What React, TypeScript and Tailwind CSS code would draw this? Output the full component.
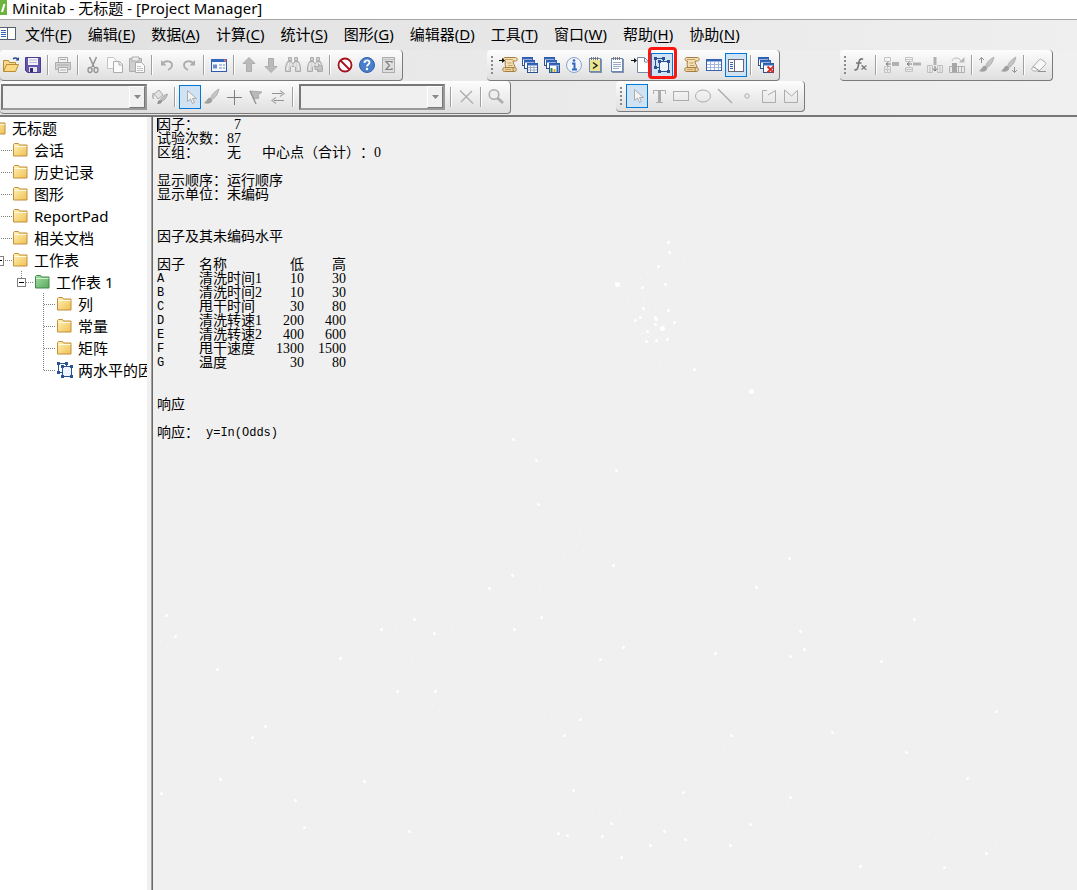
import type { ReactNode } from "react";
import clsx from "clsx";

type Tool = {
  name: string;
  icon: ReactNode;
  active?: boolean;
  marked?: boolean;
};

const GRAY = "#acacac";
const DARK = "#929292";
const NAVY = "#2b5291";

function Svg({ children }: { children: ReactNode }) {
  return (
    <svg width="20" height="20" viewBox="0 0 20 20" fill="none" className="shrink-0">
      {children}
    </svg>
  );
}

/* ---------- アイコン ---------- */

const cursorIcon = (
  <Svg>
    <path d="M7.500 3.500v11l3-2.500 2 4.500 2-1-2-4h4z" fill="#f4f4f4" stroke={GRAY} />
  </Svg>
);

const brush = (
  <>
    <path d="M17 2c-4 2-7 5-8 8l2 2c3-2 5-5 6-10z" fill="#c4c4c4" stroke={GRAY} strokeWidth="0.8" />
    <path d="M8.500 10.500c-3 0-3 3-6.500 5.500 3 1.500 8 1 8.500-3.500z" fill="#a0a0a0" />
  </>
);

const scroll = (
  <>
    <path
      d="M5 2.500h10.500c2 0 2.500 3.500 0 3.500H13c0 3 2 4 2 7h-9c-1-3-1-4-.5-7H5c-2.500 0-2.500-3.500 0-3.500z"
      fill="#f3e0b5"
      stroke="#a67c3f"
    />
    <path
      d="M4.500 12.500h9c-1 1.500-.5 4 1 4h-10c-2.500 0-2.500-4 0-4zM14.500 16.500c2.500 0 2.500-4 0-4h-1"
      fill="#ead09a"
      stroke="#a67c3f"
    />
    <path d="M7.500 8h4M8 10.500h4.500M5 4.500h8M5 14.500h6" stroke="#c4a067" />
  </>
);

const cascade = (
  <>
    <rect x="2.500" y="2.500" width="10" height="8" fill="#fff" stroke={NAVY} />
    <path d="M2 3.500h11" stroke="#3566bd" strokeWidth="2" />
    <rect x="4.500" y="5.500" width="10" height="8" fill="#fff" stroke={NAVY} />
    <path d="M4 6.500h11" stroke="#3566bd" strokeWidth="2" />
    <rect x="7.500" y="8.500" width="10" height="9" fill="#fff" stroke={NAVY} />
    <path d="M7 9.500h11" stroke="#3566bd" strokeWidth="2" />
  </>
);

const designShape = (
  <>
    <path d="M3.500 3.500h8v9h-8z" stroke={NAVY} />
    <path d="M7.500 6.500h9v10h-9z" fill="#eef4fb" stroke={NAVY} />
    <path
      d="M2 2h3v3H2zM10 2h3v3h-3zM2 11h3v3H2zM6 5h3v3H6zM15 5h3v3h-3zM6 15h3v3H6zM15 15h3v3h-3z"
      fill={NAVY}
    />
  </>
);

const notepad = (
  <>
    <rect x="4" y="4" width="12" height="14" fill="#8592aa" />
    <rect x="3.500" y="3.500" width="11" height="13" stroke="#6c88b4" fill="#fff" />
    <path d="M5.500 2v3M7.500 2v3M9.500 2v3M11.500 2v3" stroke="#777" />
  </>
);

const binoculars = (
  <>
    <path d="M5.500 2.500h3v3h-3zM11.500 2.500h3v3h-3z" fill="#d0d0d0" stroke={GRAY} />
    <path d="M4.500 6.500h4l1 2h1l1-2h4l2 5v5h-5v-5h-5v5h-5v-5z" fill="#d2d2d2" stroke={GRAY} />
    <path d="M5.500 8l-1 7M8 8v4M12 8v4M14.500 8l1 7" stroke="#f6f6f6" />
  </>
);

const undoPath = (
  <>
    <path d="M6 8c3-3 9-2 9 2 0 3-2 4-4 5" stroke={GRAY} strokeWidth="1.800" />
    <path d="M4 5v5.500h5.500z" fill={GRAY} />
  </>
);

const fileTools: (Tool | null)[] = [
  {
    name: "打开",
    icon: (
      <Svg>
        <path d="M2.500 16.500v-11h5l1 2h6v3" fill="#f6d98b" stroke="#b98a37" />
        <path d="M2.500 16.500l3-7h12l-3 7z" fill="#fbd981" stroke="#b98a37" />
        <path d="M12 4c2-2 4-1 5 1" stroke="#264f8f" strokeWidth="1.500" />
        <path d="M14.500 5.500H18V2z" fill="#264f8f" />
      </Svg>
    ),
  },
  {
    name: "保存",
    icon: (
      <Svg>
        <path d="M2.500 2.500h15v15h-13l-2-2z" fill="#6855ad" stroke="#4b3b91" />
        <path d="M5 3h10v7H5z" fill="#f2f4fa" />
        <path d="M6 5h8M6 7.500h8" stroke="#b9b9cf" />
        <path d="M6 12h8v5H6z" fill="#e5e5ee" />
        <path d="M7 13h3v4H7z" fill="#32286d" />
      </Svg>
    ),
  },
  null,
  {
    name: "打印",
    icon: (
      <Svg>
        <path d="M5.500 8V2.500h9V8" fill="#f3f3f3" stroke={GRAY} />
        <path d="M2.500 7.500h15v7h-15z" fill="#d2d2d2" stroke={GRAY} />
        <path d="M5.500 12.500h9v5h-9z" fill="#f3f3f3" stroke={GRAY} />
        <path d="M7 4.500h6M7 15h6M4 10h12" stroke={GRAY} />
      </Svg>
    ),
  },
  null,
  {
    name: "剪切",
    icon: (
      <Svg>
        <path d="M6.500 2l4.500 10M13.500 2L9 12" stroke={DARK} strokeWidth="1.500" />
        <ellipse cx="7" cy="15" rx="2" ry="2.500" stroke={DARK} strokeWidth="1.300" />
        <ellipse cx="13" cy="15" rx="2" ry="2.500" stroke={DARK} strokeWidth="1.300" />
      </Svg>
    ),
  },
  {
    name: "复制",
    icon: (
      <Svg>
        <path d="M2.500 2.500h6l3 3v8h-9z" fill="#fafafa" stroke="#c4c4c4" />
        <path d="M8.500 6.500h6l3 3v8h-9z" fill="#fafafa" stroke={GRAY} />
        <path d="M14 7v3h3" stroke={GRAY} />
      </Svg>
    ),
  },
  {
    name: "粘贴",
    icon: (
      <Svg>
        <path d="M2.500 3.500h12v13h-12z" fill="#cecece" stroke={GRAY} />
        <path d="M5 2h7v4H5z" fill="#eee" stroke={GRAY} />
        <path d="M8.500 7.500h6l3 3v7h-9z" fill="#fafafa" stroke={GRAY} />
        <path d="M10 11.500h4M10 13.500h6M10 15.500h6" stroke="#c4c4c4" />
      </Svg>
    ),
  },
  null,
  { name: "撤消", icon: <Svg>{undoPath}</Svg> },
  {
    name: "重做",
    icon: (
      <Svg>
        <g transform="matrix(-1 0 0 1 20 0)">{undoPath}</g>
      </Svg>
    ),
  },
  null,
  {
    name: "编辑对话框",
    icon: (
      <Svg>
        <rect x="2.500" y="4.500" width="15" height="12" fill="#f5f8ff" stroke="#2e59a8" />
        <path d="M2 5.500h16" stroke="#3566bd" strokeWidth="3" />
        <path d="M15 5.500h2" stroke="#f07050" strokeWidth="2" />
        <path d="M4 9.500h4v4H4z" fill="#6d8bc9" />
        <path d="M10 10h3M14 10h2M10 13h3M14 13h2" stroke="#9db0d8" strokeWidth="1.500" />
      </Svg>
    ),
  },
  null,
  {
    name: "上一个",
    icon: (
      <Svg>
        <path d="M10 2.500l6 6h-3.500v8h-5v-8H4z" fill="#bababa" stroke={GRAY} />
      </Svg>
    ),
  },
  {
    name: "下一个",
    icon: (
      <Svg>
        <path d="M10 17.500l6-6h-3.500v-8h-5v8H4z" fill="#bababa" stroke={GRAY} />
      </Svg>
    ),
  },
  { name: "查找", icon: <Svg>{binoculars}</Svg> },
  {
    name: "查找下一个",
    icon: (
      <Svg>
        {binoculars}
        <path d="M10 11.500h3.500V9l4.500 4-4.500 4v-2.500H10z" fill="#c4c4c4" stroke={GRAY} />
      </Svg>
    ),
  },
  null,
  {
    name: "取消",
    icon: (
      <Svg>
        <circle cx="10" cy="10" r="6.500" fill="#fff" stroke="#a3141c" strokeWidth="1.800" />
        <path d="M5.500 5.500l9 9" stroke="#a3141c" strokeWidth="1.800" />
      </Svg>
    ),
  },
  {
    name: "帮助",
    icon: (
      <Svg>
        <circle cx="10" cy="10" r="7.500" fill="#4a7fcb" stroke="#2f5fae" />
        <path d="M7.500 8c0-3.500 5-3.500 5-.5 0 2-2.500 2-2.500 4" stroke="#fff" strokeWidth="1.800" />
        <circle cx="10" cy="14" r="1.200" fill="#fff" />
      </Svg>
    ),
  },
  {
    name: "统计向导",
    icon: (
      <Svg>
        <rect x="3.500" y="2.500" width="12" height="15" fill="#dedede" stroke={GRAY} />
        <path d="M13 8V6.500H7l3.500 4-3.500 4h6V13" stroke="#808080" strokeWidth="1.200" />
        <path d="M4 4.500h11" stroke="#c0c0c0" />
      </Svg>
    ),
  },
];

const managerTools: (Tool | null)[] = [
  {
    name: "显示会话窗口文件夹",
    icon: (
      <Svg>
        <g transform="translate(2 0)">{scroll}</g>
        <path d="M1 5.500h4" stroke="#111" />
        <path d="M4 3l3 2.500L4 8z" fill="#111" />
      </Svg>
    ),
  },
  {
    name: "显示工作表文件夹",
    icon: (
      <Svg>
        {cascade}
        <path d="M8 12.500h9M8 15h9M10.500 11v6M14 11v6" stroke="#9aaac8" />
      </Svg>
    ),
  },
  {
    name: "显示图形文件夹",
    icon: (
      <Svg>
        {cascade}
        <path d="M9.500 17v-4" stroke="#2d8a4b" strokeWidth="2" />
        <path d="M12.500 17v-3" stroke="#e0a92c" strokeWidth="2" />
        <path d="M15.500 17v-6" stroke="#2d62b8" strokeWidth="2" />
      </Svg>
    ),
  },
  {
    name: "显示信息",
    icon: (
      <Svg>
        <circle cx="10" cy="10" r="7.500" fill="#f1f6fd" stroke="#8aa2c9" />
        <path d="M8 8.500h2.500V14M8 14.500h5" stroke="#3468c0" strokeWidth="2" />
        <circle cx="10" cy="5.500" r="1.300" fill="#3468c0" />
      </Svg>
    ),
  },
  {
    name: "显示历史记录",
    icon: (
      <Svg>
        {notepad}
        <path d="M4 5h10v11H4z" fill="#e9e48d" />
        <path d="M7 7.500l4 3-4 3" stroke="#222" strokeWidth="1.500" />
      </Svg>
    ),
  },
  {
    name: "显示 ReportPad",
    icon: (
      <Svg>
        {notepad}
        <path d="M5 7.500h8M5 9.500h8M5 11.500h8M5 13.500h6" stroke="#9aa9c4" />
      </Svg>
    ),
  },
  {
    name: "显示相关文档",
    icon: (
      <Svg>
        <path d="M7.500 2.500h7l4 4v11h-11z" fill="#fff" stroke="#7689a8" />
        <path d="M14.500 3v4h4" stroke="#7689a8" />
        <path d="M1 5.500h4" stroke="#111" />
        <path d="M4 3l3 2.500L4 8z" fill="#111" />
      </Svg>
    ),
  },
  { name: "显示设计", icon: <Svg>{designShape}</Svg>, active: true, marked: true },
  null,
  { name: "会话窗口", icon: <Svg>{scroll}</Svg> },
  {
    name: "当前数据窗口",
    icon: (
      <Svg>
        <rect x="2.500" y="4.500" width="15" height="11" fill="#fff" stroke="#3a62a8" />
        <path d="M2 5.500h16" stroke="#3566bd" strokeWidth="2" />
        <path d="M3 9.500h14M3 12.500h14M6.500 7v8M10.500 7v8M14.500 7v8" stroke="#a5b8dc" />
      </Svg>
    ),
  },
  {
    name: "项目管理器",
    active: true,
    icon: (
      <Svg>
        <rect x="2.500" y="4.500" width="15" height="12" fill="#fff" stroke="#667" />
        <path d="M8.500 5v11" stroke="#667" />
        <path d="M4 7.500h3M4 9.500h3M4 11.500h3M4 13.500h3" stroke="#3566bd" />
      </Svg>
    ),
  },
  null,
  {
    name: "关闭所有图形",
    icon: (
      <Svg>
        {cascade}
        <path d="M11.500 11.500l6 6M17.500 11.500l-6 6" stroke="#e02b20" strokeWidth="2" />
      </Svg>
    ),
  },
];

const worksheetTools: (Tool | null)[] = [
  {
    name: "指定公式",
    icon: (
      <Svg>
        <path d="M12 4.500c-2-1.500-3.500 0-4 2.500l-1 5c-.5 2.500-2 3.500-3.500 2.500M5 8h5.500" stroke="#777" strokeWidth="1.600" />
        <path d="M10.500 10.500c2 0 2.500 4 5 4M15.500 10.500l-5 4" stroke="#777" strokeWidth="1.300" />
      </Svg>
    ),
  },
  null,
  {
    name: "插入单元格",
    icon: (
      <Svg>
        <path d="M3.500 2.500h6v4h-6zM3.500 11.500h6v6h-6zM6.500 11.500v6M3.500 14.500h6" stroke="#c4c4c4" />
        <path d="M11 7h7v4h-7z" fill="#b0b0b0" />
        <path d="M5 9h5M7.500 7L5 9l2.500 2" stroke="#777" />
      </Svg>
    ),
  },
  {
    name: "插入行",
    icon: (
      <Svg>
        <path d="M2.500 2.500h7v4h-7zM2.500 12.500h7v4h-7zM2.500 4.500h7M2.500 14.500h7" stroke="#c4c4c4" />
        <path d="M10 7.500h8v3h-8z" fill="#b0b0b0" />
        <path d="M4 9h5M6.500 7L4 9l2.500 2" stroke="#777" />
      </Svg>
    ),
  },
  {
    name: "插入列",
    icon: (
      <Svg>
        <path d="M2.500 10.500h5v7h-5zM12.500 10.500h5v7h-5zM5 10.500v7M15 10.500v7" stroke="#c0c0c0" />
        <path d="M8.500 2h3v8h-3z" fill="#b0b0b0" />
        <path d="M10 11v5M8 13.500l2 2.500 2-2.500" stroke="#777" />
      </Svg>
    ),
  },
  {
    name: "移动列",
    icon: (
      <Svg>
        <path d="M2.500 11.500h15v6h-15zM11.500 11.500v6M14.500 11.500v6" stroke="#b0b0b0" />
        <path d="M5 8h5v9H5z" fill="#a6a6a6" />
        <path d="M5 6c1-4 7-4 9 0" stroke="#b8b8b8" />
        <path d="M17.500 2v5.500H12z" fill="#b8b8b8" />
      </Svg>
    ),
  },
  null,
  {
    name: "上一个刷亮行",
    icon: (
      <Svg>
        {brush}
        <path d="M4.500 8V2.500M2 5l2.500-2.500L7 5" stroke={DARK} />
      </Svg>
    ),
  },
  {
    name: "下一个刷亮行",
    icon: (
      <Svg>
        {brush}
        <path d="M15.500 12v5.500M13 15l2.500 2.500L18 15" stroke={DARK} />
      </Svg>
    ),
  },
  null,
  {
    name: "清除单元格",
    icon: (
      <Svg>
        <path d="M3 13l7-8c1-1 2-1 3 0l3 2c1 1 1 2 0 3l-6 6H6c-2 0-4-1-3-3z" fill="#f7f7f7" stroke={GRAY} />
        <path d="M4 11.500l6 4M9 16.500h8" stroke={DARK} />
      </Svg>
    ),
  },
];

const graphTools: (Tool | null)[] = [
  { name: "选择", icon: cursorIcon, active: true },
  { name: "刷亮", icon: <Svg>{brush}</Svg> },
  {
    name: "十字线",
    icon: (
      <Svg>
        <path d="M10.500 3v15M3 10.500h15" stroke="#808080" />
      </Svg>
    ),
  },
  {
    name: "标志",
    icon: (
      <Svg>
        <path d="M4 4l12 1-4 3 1 3-5 1z" fill="#b9b9b9" stroke={GRAY} />
        <path d="M4 4l6 13" stroke={DARK} strokeWidth="1.300" />
      </Svg>
    ),
  },
  {
    name: "交换",
    icon: (
      <Svg>
        <path d="M4 6.500h10M6 13.500h10" stroke={DARK} />
        <path d="M12 3.500l4 3-4 3M8 10.500l-4 3 4 3" stroke={GRAY} strokeWidth="1.300" />
      </Svg>
    ),
  },
];

const annotationTools: (Tool | null)[] = [
  { name: "选择", icon: cursorIcon, active: true },
  {
    name: "文本",
    icon: (
      <Svg>
        <path d="M4.500 8V4.500h12V8" stroke={GRAY} />
        <path d="M10.500 4v12" stroke={GRAY} strokeWidth="3" />
        <path d="M7 16.500h7" stroke={GRAY} />
      </Svg>
    ),
  },
  {
    name: "矩形",
    icon: (
      <Svg>
        <rect x="2.500" y="5.500" width="15" height="9" stroke={GRAY} />
      </Svg>
    ),
  },
  {
    name: "椭圆",
    icon: (
      <Svg>
        <ellipse cx="10" cy="10" rx="7.500" ry="6" stroke={GRAY} />
      </Svg>
    ),
  },
  {
    name: "直线",
    icon: (
      <Svg>
        <path d="M3 3l14 14" stroke={GRAY} strokeWidth="1.400" />
      </Svg>
    ),
  },
  {
    name: "标记",
    icon: (
      <Svg>
        <circle cx="10" cy="10" r="2.200" stroke={GRAY} />
      </Svg>
    ),
  },
  {
    name: "折线",
    icon: (
      <Svg>
        <path d="M8 4.500H3.500v12h13v-12L9 9" stroke={GRAY} />
      </Svg>
    ),
  },
  {
    name: "多边形",
    icon: (
      <Svg>
        <path d="M3.500 4v12.500h13v-12L10.500 10z" stroke={GRAY} />
      </Svg>
    ),
  },
];

const paintTool: Tool = {
  name: "填充",
  icon: (
    <Svg>
      <path d="M4 7l5-4 4 5-5 4z" fill="#e2e2e2" stroke={GRAY} />
      <path d="M3.500 6c-1 2-1 4 0 6" stroke={GRAY} strokeWidth="1.500" />
      <path d="M17.500 7c-4 1-6 4-7 6l2 1c2-1 4-3 5-7z" fill="#c0c0c0" stroke={GRAY} />
      <path d="M10 13c-2 0-2 2-3 3.500 2 1 5 0 5-2.500z" fill={DARK} />
    </Svg>
  ),
};

const deleteTool: Tool = {
  name: "删除",
  icon: (
    <Svg>
      <path d="M4 3.500l13 13M16 4L5 15" stroke={GRAY} strokeWidth="1.300" />
    </Svg>
  ),
};

const zoomTool: Tool = {
  name: "缩放",
  icon: (
    <Svg>
      <circle cx="8" cy="7.500" r="4.800" fill="#eee" stroke={GRAY} strokeWidth="1.500" />
      <path d="M11.500 11l5.500 5" stroke={GRAY} strokeWidth="2.800" />
    </Svg>
  ),
};

/* ---------- ツールバー ---------- */

function ToolButton({ tool }: { tool: Tool }) {
  return (
    <button
      type="button"
      aria-label={tool.name}
      className={clsx(
        "relative flex h-6 w-[22px] shrink-0 items-center justify-center",
        tool.active && "border border-[#0078d7] bg-[#cfe3f4]",
      )}
    >
      {tool.icon}
      {tool.marked && (
        <span className="absolute -top-[7px] -left-1 h-8 w-[29px] rounded-sm border-3 border-[#fb1710]" />
      )}
    </button>
  );
}

function Separator() {
  return (
    <span className="flex h-5 w-2 shrink-0 justify-center">
      <span className="w-px bg-[#a0a0a0]" />
      <span className="w-px bg-white" />
    </span>
  );
}

function Grip() {
  return (
    <span className="flex w-[10px] shrink-0 flex-col items-center gap-[2px]">
      {[0, 1, 2, 3, 4].map((n) => (
        <span key={n} className="size-[2px] bg-[#8a8a8a]" />
      ))}
    </span>
  );
}

function Tools({ tools }: { tools: (Tool | null)[] }) {
  return tools.map((tool, i) => (tool ? <ToolButton key={i} tool={tool} /> : <Separator key={i} />));
}

function ToolGroup({ label, className, children }: { label: string; className?: string; children: ReactNode }) {
  return (
    <div
      role="toolbar"
      aria-label={label}
      className={clsx(
        "flex shrink-0 items-center rounded-sm border-r border-b border-[#7a7a7a] bg-linear-to-b from-[#fdfdfd] to-[#dfdfdf]",
        className,
      )}
    >
      {children}
    </div>
  );
}

function ComboBox({ label }: { label: string }) {
  return (
    <span className="flex h-[26px] w-[146px] shrink-0 border-2 border-t-[#777] border-r-[#999] border-b-[#999] border-l-[#777] bg-[#f0f0f0]">
      <select aria-label={label} className="min-w-0 flex-1 appearance-none bg-transparent" />
      <span className="pointer-events-none flex w-4 items-center justify-center border border-t-white border-r-[#777] border-b-[#777] border-l-white bg-[#f0f0f0]">
        <svg width="7" height="4" viewBox="0 0 7 4">
          <path d="M0 0h7L3.500 4z" fill="#888" />
        </svg>
      </span>
    </span>
  );
}

/* ---------- メニュー ---------- */

const menus = [
  ["文件", "F"],
  ["编辑", "E"],
  ["数据", "A"],
  ["计算", "C"],
  ["统计", "S"],
  ["图形", "G"],
  ["编辑器", "D"],
  ["工具", "T"],
  ["窗口", "W"],
  ["帮助", "H"],
  ["协助", "N"],
];

function MenuBar() {
  return (
    <nav className="flex h-[30px] items-center bg-linear-to-r from-[#e0e0e0] to-[#efefef] pb-[2px]">
      <svg width="16" height="14" viewBox="0 0 16 14" fill="none" className="mr-[9px]">
        <rect x="-1.500" y="0.500" width="17" height="12" fill="#fff" stroke="#555f70" />
        <path d="M7.500 1v11" stroke="#555f70" />
        <path d="M1 3.500h5M1 5.500h5M1 7.500h5M1 9.500h5" stroke="#3566bd" />
      </svg>
      <div className="flex gap-4">
        {menus.map(([text, key]) => (
          <button key={key} type="button" className="whitespace-nowrap">
            {text}(<u className="underline-offset-2">{key}</u>)
          </button>
        ))}
      </div>
    </nav>
  );
}

/* ---------- ツリー ---------- */

function Folder({ green }: { green?: boolean }) {
  return (
    <svg width="15" height="14" viewBox="0 0 15 14" className="shrink-0">
      <defs>
        <linearGradient id={green ? "folderGreen" : "folderYellow"} x1="0" y1="0" x2="1" y2="1">
          <stop offset="0" stopColor={green ? "#a8dca6" : "#fff3b8"} />
          <stop offset="1" stopColor={green ? "#55ab5c" : "#f0c052"} />
        </linearGradient>
      </defs>
      <path
        d="M0.500 13V1.500l1-1h4l1 1.500h7.500v11z"
        fill={green ? "url(#folderGreen)" : "url(#folderYellow)"}
        stroke={green ? "#3f8a49" : "#c28e3c"}
      />
      <path d="M1 3.500h12.500" stroke={green ? "#d2efcf" : "#fffbe0"} />
    </svg>
  );
}

const dots = { stroke: "#808080", strokeDasharray: "1 1" };

function Guide({ kind }: { kind: "leaf" | "branch" | "sheet" | "item" | "last" }) {
  if (kind === "leaf" || kind === "branch") {
    return (
      <svg width="13" height="22" viewBox="0 0 13 22" fill="none" className="shrink-0">
        <path d="M1 11.500h11" {...dots} />
        {kind === "branch" && (
          <>
            <rect x="-5.500" y="7.500" width="9" height="9" fill="#fff" stroke="#808080" />
            <path d="M0 11.500h2" stroke="#000" />
          </>
        )}
      </svg>
    );
  }
  if (kind === "sheet") {
    return (
      <svg width="35" height="22" viewBox="0 0 35 22" fill="none" className="shrink-0">
        <path d="M21.500 0v7M26 11.500h8" {...dots} />
        <rect x="17.500" y="7.500" width="8" height="8" fill="#fff" stroke="#808080" />
        <path d="M19 11.500h5" stroke="#000" />
      </svg>
    );
  }
  return (
    <svg width="57" height="22" viewBox="0 0 57 22" fill="none" className="shrink-0">
      <path d={kind === "last" ? "M43.500 0v11M44 11.500h12" : "M43.500 0v22M44 11.500h12"} {...dots} />
    </svg>
  );
}

function TreeRow({ guide, green, design, children }: {
  guide: "leaf" | "branch" | "sheet" | "item" | "last";
  green?: boolean;
  design?: boolean;
  children: ReactNode;
}) {
  return (
    <li className="flex h-[22px] items-center whitespace-nowrap">
      <Guide kind={guide} />
      {design ? (
        <svg width="15" height="16" viewBox="2 2 15 16" fill="none" className="shrink-0 overflow-visible">
          {designShape}
        </svg>
      ) : (
        <Folder green={green} />
      )}
      <span className="ml-[6px]">{children}</span>
    </li>
  );
}

function ProjectTree() {
  return (
    <aside className="w-[147px] shrink-0 overflow-hidden bg-white">
      <ul>
        <li className="flex h-[22px] items-center whitespace-nowrap">
          <span className="-ml-[9px] flex">
            <Folder />
          </span>
          <span className="ml-[6px]">无标题</span>
        </li>
        <TreeRow guide="leaf">会话</TreeRow>
        <TreeRow guide="leaf">历史记录</TreeRow>
        <TreeRow guide="leaf">图形</TreeRow>
        <TreeRow guide="leaf">ReportPad</TreeRow>
        <TreeRow guide="leaf">相关文档</TreeRow>
        <TreeRow guide="branch">工作表</TreeRow>
        <TreeRow guide="sheet" green>工作表 1</TreeRow>
        <TreeRow guide="item">列</TreeRow>
        <TreeRow guide="item">常量</TreeRow>
        <TreeRow guide="item">矩阵</TreeRow>
        <TreeRow guide="last" design>两水平的因</TreeRow>
      </ul>
    </aside>
  );
}

/* ---------- 设计摘要 ---------- */

const factors = [
  ["A", "清洗时间1", "10", "30"],
  ["B", "清洗时间2", "10", "30"],
  ["C", "甩干时间", "30", "80"],
  ["D", "清洗转速1", "200", "400"],
  ["E", "清洗转速2", "400", "600"],
  ["F", "甩干速度", "1300", "1500"],
  ["G", "温度", "30", "80"],
];

// [x, y, 直径]
const specks = [
  [668, 242, 3], [690, 242, 1], [669, 252, 3], [674, 254, 1], [683, 261, 1], [685, 266, 1],
  [658, 266, 3], [649, 267, 1], [640, 278, 1], [617, 284, 5], [665, 284, 3], [642, 287, 3],
  [701, 287, 1], [637, 297, 1], [628, 303, 1], [643, 303, 1], [617, 306, 1], [648, 306, 1],
  [643, 308, 3], [698, 307, 1], [668, 310, 3], [614, 312, 1], [640, 317, 3], [655, 317, 3],
  [656, 319, 3], [635, 320, 3], [655, 324, 3], [674, 322, 3], [662, 328, 5], [647, 331, 3],
  [642, 333, 1], [651, 334, 1], [648, 336, 1], [659, 337, 1], [646, 341, 3], [656, 340, 3],
  [667, 339, 3], [613, 344, 1], [689, 344, 1], [660, 361, 1], [694, 369, 3], [751, 391, 5],
  [513, 439, 3], [536, 460, 3], [538, 504, 3], [530, 514, 1], [579, 529, 1], [433, 536, 1],
  [576, 544, 1], [564, 558, 1], [512, 575, 3], [489, 588, 3], [540, 586, 1], [166, 615, 3],
  [177, 622, 1], [330, 615, 1], [414, 619, 3], [395, 624, 1], [452, 624, 1], [381, 629, 3],
  [434, 633, 3], [541, 617, 3], [514, 629, 3], [577, 628, 1], [175, 636, 3], [160, 641, 1],
  [205, 661, 1], [217, 669, 3], [340, 658, 3], [411, 661, 1], [600, 659, 3], [397, 691, 3],
  [435, 691, 3], [432, 705, 1], [526, 711, 1], [551, 716, 1], [580, 719, 3], [265, 726, 3],
  [252, 737, 3], [255, 743, 1], [564, 735, 3], [409, 746, 1], [220, 779, 3], [161, 793, 3],
  [364, 781, 3], [295, 800, 3], [304, 827, 3], [409, 831, 3], [485, 806, 1], [573, 790, 3],
  [592, 811, 1], [558, 833, 3], [567, 835, 3], [602, 836, 3], [433, 857, 1], [616, 470, 3],
  [613, 565, 3], [789, 558, 3], [756, 587, 3], [806, 610, 1], [713, 627, 1], [914, 619, 3],
  [800, 631, 3], [623, 647, 3], [715, 653, 3], [722, 657, 1], [804, 649, 3], [790, 656, 3],
  [881, 661, 3], [996, 711, 3], [731, 735, 3], [832, 732, 3], [690, 749, 1], [723, 746, 1],
  [837, 760, 1], [906, 752, 3], [967, 778, 3], [683, 792, 3], [790, 797, 3], [788, 800, 1],
  [614, 799, 1], [619, 812, 1], [611, 823, 3], [750, 824, 3], [664, 831, 3], [685, 839, 3],
  [673, 840, 1], [650, 845, 3], [730, 845, 3], [621, 857, 3], [746, 874, 1], [782, 882, 1],
  [860, 866, 3], [944, 867, 3], [928, 833, 1], [986, 853, 3], [996, 843, 1],
];

function Specks() {
  return (
    <svg aria-hidden="true" width="924" height="773" viewBox="153 117 924 773" className="absolute top-0 left-0">
      {specks.map(([x, y, d]) => (
        <circle key={`${x}-${y}`} cx={x + 0.5} cy={y + 0.5} r={d / 2} fill="#fff" />
      ))}
    </svg>
  );
}

function DesignSummary() {
  return (
    <main className="relative min-w-0 flex-1 overflow-hidden border-l border-[#696969] bg-[#f0f0f0] pt-px pl-1 font-['Liberation_Serif','Noto_Sans_CJK_SC',serif] text-sm leading-[14px] whitespace-nowrap [text-spacing-trim:space-all]">
      <Specks />
      <div className="relative">
        {/* 光标 */}
        <span className="absolute top-0 left-0 h-[14px] w-px bg-black" />
        <p className="flex">
          <span className="w-[77px]">因子：</span>7
        </p>
        <p className="flex">
          <span className="w-[70px]">试验次数：</span>87
        </p>
        <p className="flex">
          <span className="w-[70px]">区组：</span>
          <span className="w-[35px]">无</span>中心点（合计）：0
        </p>
        <p className="mt-[14px]">显示顺序：运行顺序</p>
        <p>显示单位：未编码</p>

        <h2 className="mt-7">因子及其未编码水平</h2>
        <table className="mt-[14px] table-fixed border-collapse">
          <thead>
            <tr className="h-[14px] *:p-0 *:font-normal">
              <th className="w-[42px] text-left">因子</th>
              <th className="w-[63px] text-left">名称</th>
              <th className="w-[42px] text-right">低</th>
              <th className="w-[42px] text-right">高</th>
            </tr>
          </thead>
          <tbody>
            {factors.map(([id, name, low, high]) => (
              <tr key={id} className="h-[14px] *:p-0">
                <td className="font-['Liberation_Mono',monospace] text-xs leading-[14px]">{id}</td>
                <td>{name}</td>
                <td className="text-right">{low}</td>
                <td className="text-right">{high}</td>
              </tr>
            ))}
          </tbody>
        </table>

        <h2 className="mt-7">响应</h2>
        <p className="mt-[14px] flex">
          <span className="w-[49px]">响应：</span>
          <span className="font-['Liberation_Mono',monospace] text-xs leading-[14px]">y=In(Odds)</span>
        </p>
      </div>
    </main>
  );
}

export default function App() {
  return (
    <div className="flex min-h-screen flex-col overflow-hidden bg-[#f0f0f0] font-['Noto_Sans','Noto_Sans_CJK_SC',sans-serif] text-[15px] leading-5 text-black">
      {/* タイトルバー */}
      <header className="flex h-5 items-start border-b border-[#a5a5a5] bg-white">
        <svg width="8" height="16" viewBox="0 0 8 16" className="mr-1">
          <path d="M0 0h7v15H0z" fill="#6db33f" />
          <path d="M4.500 4L2 12" stroke="#fff" strokeWidth="2" />
        </svg>
        <h1 className="leading-4 whitespace-nowrap">Minitab - 无标题 - [Project Manager]</h1>
      </header>

      <MenuBar />

      <div className="border-b-2 border-[#777] bg-linear-to-r from-[#e4e4e4] to-[#f0f0f0]">
        <div className="flex h-[31px]">
          <ToolGroup label="标准" className="mr-[84px] w-[403px]">
            <Tools tools={fileTools} />
          </ToolGroup>
          <ToolGroup label="项目管理器" className="mr-[60px] w-[293px]">
            <Grip />
            <Tools tools={managerTools} />
          </ToolGroup>
          <ToolGroup label="工作表" className="w-[213px]">
            <Grip />
            <Tools tools={worksheetTools} />
          </ToolGroup>
        </div>
        <div className="flex h-[34px] items-start">
          <ToolGroup label="图形编辑" className="mr-[105px] h-[33px] w-[511px] gap-[2px] pl-px">
            <ComboBox label="图形项目" />
            <span className="flex items-center">
              <ToolButton tool={paintTool} />
              <Separator />
              <Tools tools={graphTools} />
              <Separator />
            </span>
            <ComboBox label="模型" />
            <span className="flex items-center">
              <Separator />
              <ToolButton tool={deleteTool} />
              <Separator />
              <ToolButton tool={zoomTool} />
            </span>
          </ToolGroup>
          <ToolGroup label="注释" className="h-[31px] w-[189px]">
            <Grip />
            <Tools tools={annotationTools} />
          </ToolGroup>
        </div>
      </div>

      <div className="flex flex-1">
        <ProjectTree />
        <div className="w-[5px] shrink-0 border-r border-[#a0a0a0] bg-[#f0f0f0]" />
        <DesignSummary />
      </div>
    </div>
  );
}
